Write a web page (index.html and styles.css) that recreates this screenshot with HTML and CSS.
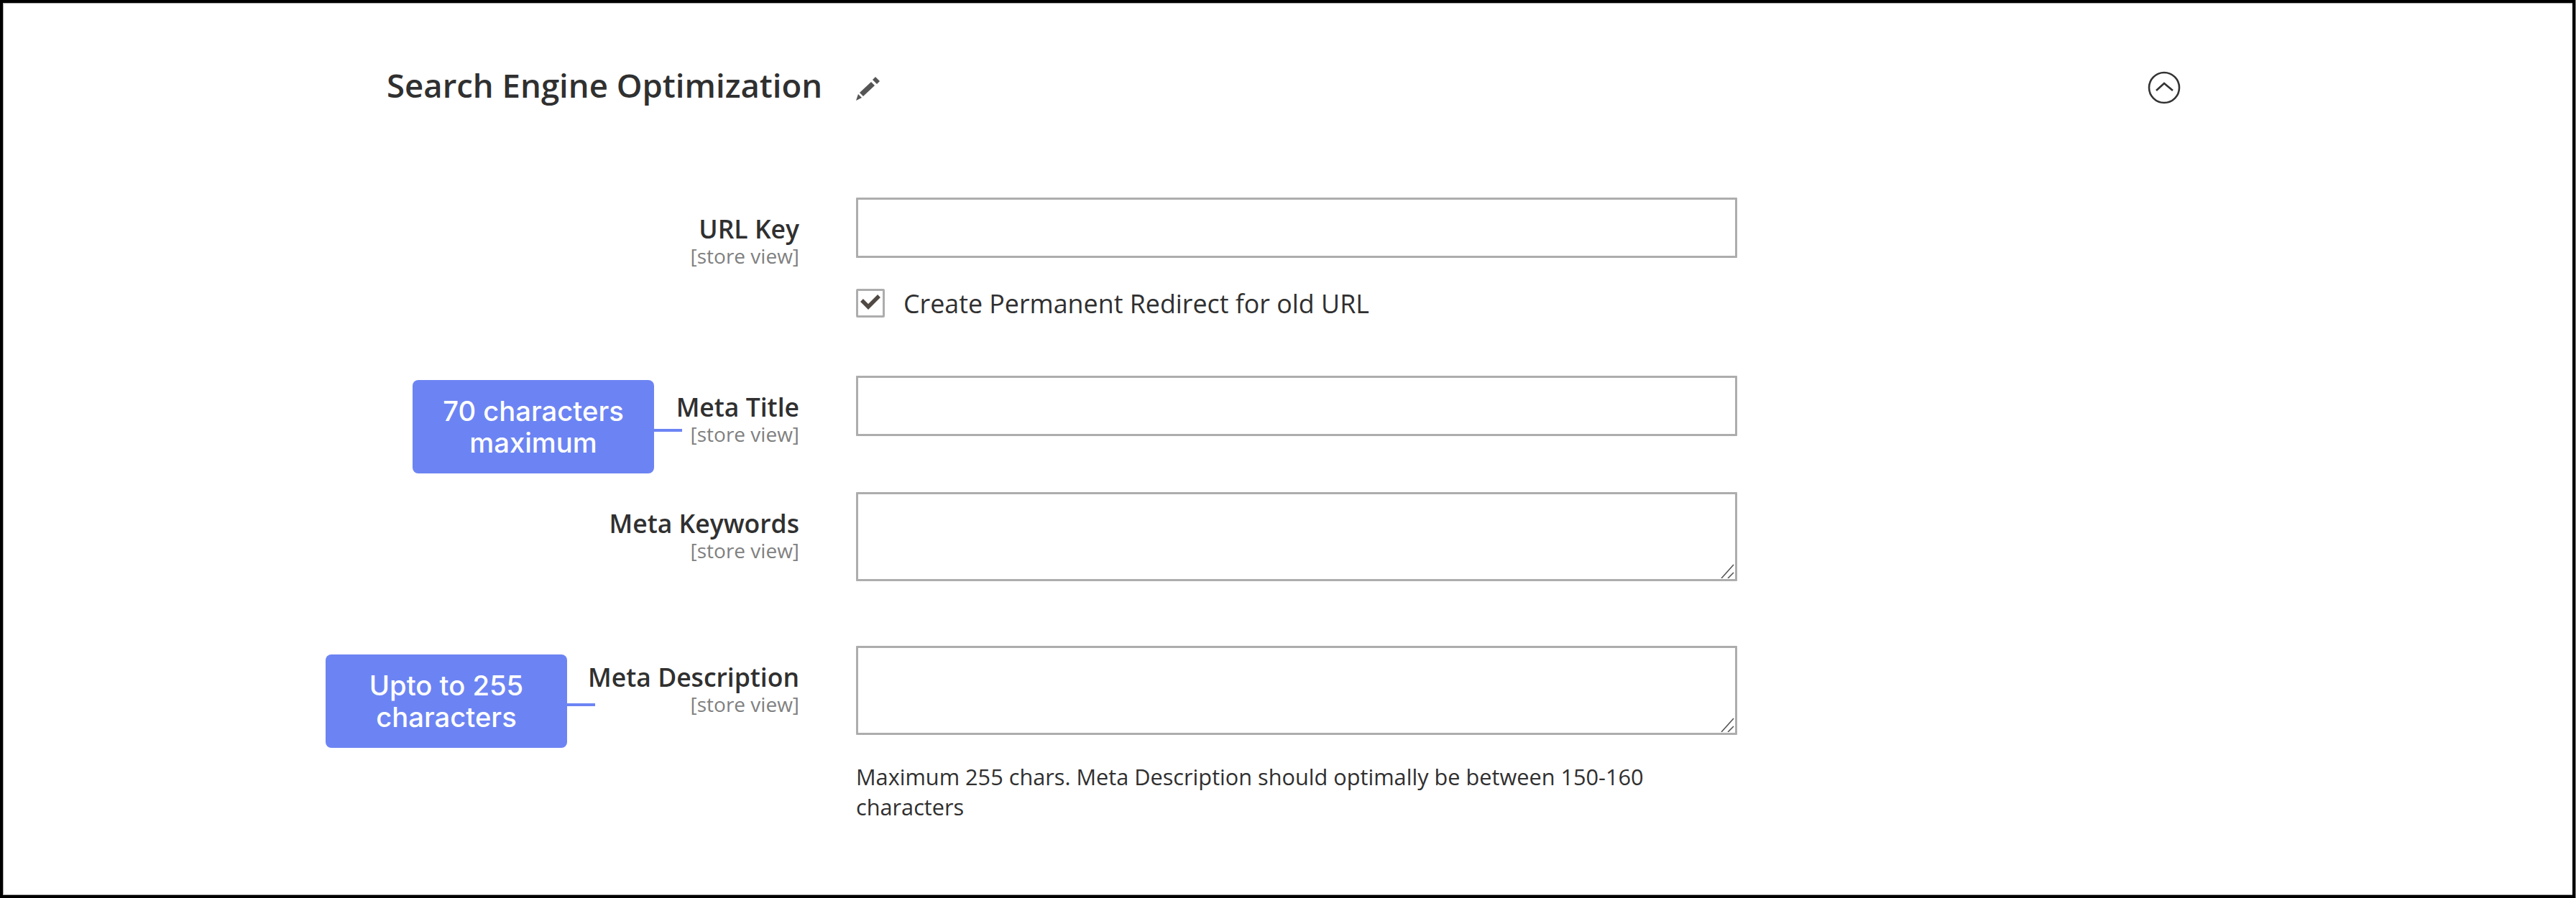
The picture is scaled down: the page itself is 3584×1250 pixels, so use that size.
FILE: index.html
```html
<!DOCTYPE html>
<html lang="en">
<head>
    <meta charset="UTF-8">
    <title>Search Engine Optimization</title>
    <link rel="stylesheet" href="styles.css">
</head>
<body>
<div class="frame">
    <header class="section-head">
        <h2>Search Engine Optimization</h2>
        <svg class="pencil" viewBox="0 0 36 36" width="36" height="36">
            <path d="M21 10 L26 15 L10 30 L5 25 Z" fill="#555"></path>
            <path d="M27 3 L33 9 L29 13 L23 7 Z" fill="#555"></path>
            <path d="M3 27 L8 32 L0 36 Z" fill="#555"></path>
        </svg>
        <svg class="collapse" viewBox="0 0 46 46" width="46" height="46">
            <circle cx="23" cy="23" r="21" fill="none" stroke="#333" stroke-width="2.6"></circle>
            <path d="M12 27 L23 17 L35 27" fill="none" stroke="#333" stroke-width="2.6"></path>
        </svg>
    </header>

    <div class="field field-url">
        <label class="field-label">URL Key<small>[store view]</small></label>
        <div class="field-control">
            <input type="text" class="text-input">
            <div class="check-row">
                <span class="checkbox">
                    <svg viewBox="0 0 40 40" width="40" height="40">
                        <path d="M8 16 L17 25 L32 10" fill="none" stroke="#514943" stroke-width="5.5"></path>
                    </svg>
                </span>
                <span>Create Permanent Redirect for old URL</span>
            </div>
        </div>
    </div>

    <div class="field field-title">
        <label class="field-label">Meta Title<small>[store view]</small>
            <span class="callout callout-title">70 characters maximum</span>
        </label>
        <div class="field-control">
            <input type="text" class="text-input">
        </div>
    </div>

    <div class="field field-keywords">
        <label class="field-label">Meta Keywords<small>[store view]</small></label>
        <div class="field-control">
            <div class="area-wrap">
                <textarea class="text-area"></textarea>
                <svg class="grip" viewBox="0 0 20 20" width="20" height="20">
                    <path d="M2 20 L19 1 M11 20 L19 12" fill="none" stroke="#555" stroke-width="1.6"></path>
                </svg>
            </div>
        </div>
    </div>

    <div class="field field-desc">
        <label class="field-label">Meta Description<small>[store view]</small>
            <span class="callout callout-desc">Upto to 255 characters</span>
        </label>
        <div class="field-control">
            <div class="area-wrap">
                <textarea class="text-area"></textarea>
                <svg class="grip" viewBox="0 0 20 20" width="20" height="20">
                    <path d="M2 20 L19 1 M11 20 L19 12" fill="none" stroke="#555" stroke-width="1.6"></path>
                </svg>
            </div>
            <p class="note">Maximum 255 chars. Meta Description should optimally be between 150-160 characters</p>
        </div>
    </div>
</div>
</body>
</html>
```

FILE: styles.css
```css
html, body {
    margin: 0;
    padding: 0;
    background: #8a8a8a;
}
.frame {
    box-sizing: border-box;
    width: 3583px;
    height: 1250px;
    border: 4px solid #000;
    padding: 0 0 0 534px;
    background: #fff;
    box-shadow: inset 1px 1px 0 #aaa, inset 0 -1px 0 #aaa;
    font-family: "Open Sans", sans-serif;
    color: #303030;
    overflow: hidden;
}
.section-head {
    display: flex;
    align-items: center;
    height: 46px;
    margin-top: 95px;
}
.section-head h2 {
    margin: 0;
    font-size: 45.5px;
    font-weight: 600;
    line-height: 46px;
    width: 653px;
    white-space: nowrap;
    position: relative;
    top: -4px;
}
.pencil {
    margin-right: 1761px;
}
.field {
    display: grid;
    grid-template-columns: 574px 1226px;
    column-gap: 79px;
}
.field-url { margin-top: 130px; }
.field-title { margin-top: 81px; }
.field-keywords { margin-top: 65px; }
.field-desc { margin-top: 90px; }
.field-label {
    position: relative;
    display: block;
    text-align: right;
    font-size: 35.5px;
    font-weight: 600;
    line-height: 44px;
    padding-top: 21px;
}
.field-label small {
    display: block;
    font-size: 28px;
    font-weight: 400;
    line-height: 32px;
    color: #808080;
}
.field-control {
    min-width: 0;
}
.text-input,
.text-area {
    display: block;
    box-sizing: border-box;
    width: 100%;
    margin: 0;
    border: 3px solid #adadad;
    border-radius: 1px;
    background: #fff;
}
.text-input { height: 84px; }
.text-area { height: 124px; resize: none; }
.area-wrap {
    position: relative;
}
.grip {
    position: absolute;
    right: 4px;
    bottom: 4px;
}
.check-row {
    display: flex;
    align-items: center;
    gap: 26px;
    margin-top: 43px;
    font-size: 35.8px;
    line-height: 40px;
}
.checkbox {
    box-sizing: border-box;
    display: block;
    width: 40px;
    height: 40px;
    border: 3px solid #adadad;
    border-radius: 2px;
}
.checkbox svg {
    display: block;
    margin: -3px;
}
.note {
    margin: 37px 0 0;
    font-size: 30.7px;
    line-height: 42px;
}
.callout {
    position: absolute;
    box-sizing: border-box;
    display: flex;
    align-items: center;
    justify-content: center;
    width: 336px;
    height: 130px;
    padding: 0 40px;
    border-radius: 8px;
    background: #6c84f3;
    color: #fff;
    font-family: Inter, sans-serif;
    font-size: 38.2px;
    font-weight: 500;
    line-height: 44px;
    text-align: center;
}
.callout::after {
    content: "";
    position: absolute;
    left: 100%;
    top: 68px;
    width: 39px;
    height: 4px;
    background: #6c84f3;
}
.callout-title {
    left: 36px;
    top: 6px;
}
.callout-desc {
    left: -85px;
    top: 12px;
}
```
